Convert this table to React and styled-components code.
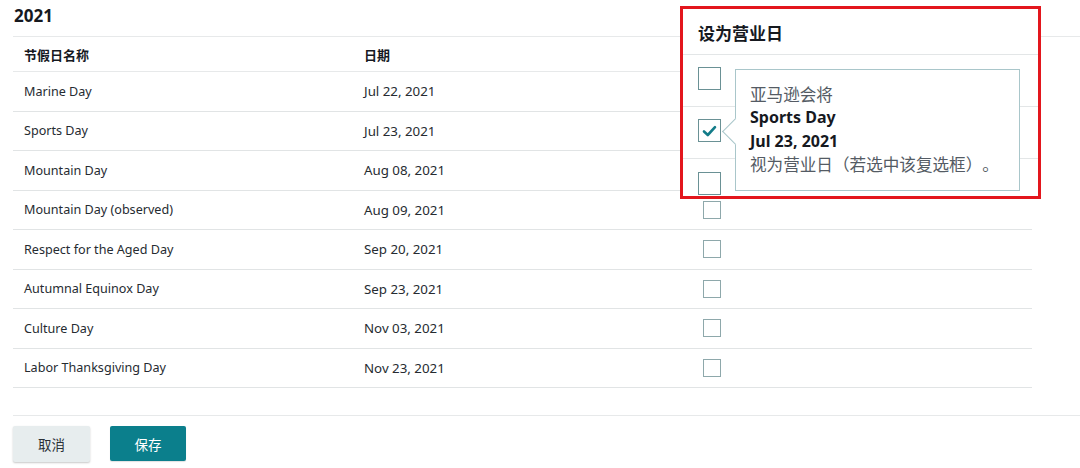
import React from "react";
import styled, { createGlobalStyle } from "styled-components";

const Global = createGlobalStyle`
  html, body { margin: 0; padding: 0; background: #fff; }
  body {
    font-family: "Noto Sans", "Noto Sans CJK SC", sans-serif;
    color: #16191f;
    overflow: hidden;
    text-spacing-trim: space-all;
  }
`;

const Page = styled.div`
  position: relative;
  width: 1080px;
  height: 468px;
  padding-left: 13px;
  box-sizing: border-box;
  overflow: hidden;
`;

const Title = styled.div`
  height: 37px;
  display: flex;
  align-items: center;
  padding-left: 1px;
  padding-bottom: 6px;
  box-sizing: border-box;
  font-size: 17px;
  font-weight: 700;
  color: #16191f;
  border-bottom: 1px solid #e7e9ea;
`;

const Table = styled.div`
  width: 1019px;
  display: flex;
  flex-direction: column;
`;

const Row = styled.div`
  display: grid;
  grid-template-columns: 340px 339px 1fr;
  align-items: center;
  height: ${(p) => (p.$head ? "35px" : "39.5px")};
  border-bottom: 1px solid ${(p) => (p.$head ? "#e7e9ea" : "#e1e4e5")};
  box-sizing: border-box;
`;

const Cell = styled.div`
  padding-left: 11px;
  font-size: ${(p) => (p.$head ? "13px" : p.$date ? "13.3px" : "12.6px")};
  font-weight: ${(p) => (p.$head ? 700 : 400)};
  color: ${(p) => (p.$head ? "#16191f" : "#262b31")};
  display: flex;
  align-items: center;
  white-space: nowrap;
`;

const Box = styled.span`
  display: inline-flex;
  align-items: center;
  justify-content: center;
  width: ${(p) => (p.$big ? "23px" : "18px")};
  height: ${(p) => (p.$big ? "23px" : "18px")};
  box-sizing: border-box;
  border: ${(p) => (p.$big ? "1.6px solid #6a9195" : "1.3px solid #8ea8ab")};
  background: #fff;
`;

const Footer = styled.div`
  margin-top: 27px;
  border-top: 1px solid #e7e9ea;
  padding-top: 10px;
  display: flex;
  gap: 20px;
`;

const Button = styled.button`
  width: ${(p) => (p.$primary ? "76px" : "77px")};
  height: ${(p) => (p.$primary ? "35px" : "36px")};
  border: none;
  border-radius: 2px;
  font-family: "Noto Sans", "Noto Sans CJK SC", sans-serif;
  font-size: 13.5px;
  background: ${(p) => (p.$primary ? "#0b7f8c" : "#e7edee")};
  color: ${(p) => (p.$primary ? "#ffffff" : "#2b3036")};
  box-shadow: ${(p) =>
    p.$primary ? "0 1px 1px rgba(0,0,0,0.12)" : "0 1px 2px rgba(0,0,0,0.22)"};
  padding: 0;
`;

const Highlight = styled.div`
  position: absolute;
  left: 680px;
  top: 6px;
  width: 361px;
  height: 193px;
  box-sizing: border-box;
  border: 3px solid #e3161d;
  background: #fff;
  display: flex;
  flex-direction: column;
`;

const MagHeader = styled.div`
  height: 46px;
  flex: none;
  display: flex;
  align-items: center;
  padding-left: 15px;
  padding-top: 1px;
  box-sizing: border-box;
  font-size: 17px;
  font-weight: 700;
  color: #16191f;
  border-bottom: 1px solid #e3e6e7;
`;

const MagRow = styled.div`
  height: 52px;
  flex: none;
  display: flex;
  align-items: center;
  padding-left: 15px;
  padding-bottom: 4px;
  box-sizing: border-box;
  border-bottom: ${(p) => (p.$last ? "none" : "1px solid #e3e6e7")};
`;

const Tip = styled.div`
  position: absolute;
  left: 52px;
  top: 60px;
  width: 285px;
  height: 122px;
  box-sizing: border-box;
  border: 1.3px solid #a9c6ca;
  background: #fff;
  padding: 13px 0 0 14px;
  display: flex;
  flex-direction: column;
  &::before {
    content: "";
    position: absolute;
    left: -10px;
    top: 52px;
    width: 18px;
    height: 18px;
    background: #fff;
    border-left: 1.3px solid #a9c6ca;
    border-bottom: 1.3px solid #a9c6ca;
    transform: rotate(45deg);
  }
`;

const TipLine = styled.div`
  position: relative;
  font-size: ${(p) => (p.$bold ? "16px" : "16.6px")};
  line-height: 23.3px;
  font-weight: ${(p) => (p.$bold ? 700 : 400)};
  color: ${(p) => (p.$bold ? "#16191f" : "#545b64")};
  white-space: nowrap;
`;

const Check = () => (
  <svg width="15" height="12" viewBox="0 0 15 12">
    <polyline
      points="2,6.5 5.8,10 13,2.2"
      fill="none"
      stroke="#137c89"
      strokeWidth="2.6"
      strokeLinecap="round"
      strokeLinejoin="round"
    />
  </svg>
);

const holidays = [
  ["Marine Day", "Jul 22, 2021"],
  ["Sports Day", "Jul 23, 2021"],
  ["Mountain Day", "Aug 08, 2021"],
  ["Mountain Day (observed)", "Aug 09, 2021"],
  ["Respect for the Aged Day", "Sep 20, 2021"],
  ["Autumnal Equinox Day", "Sep 23, 2021"],
  ["Culture Day", "Nov 03, 2021"],
  ["Labor Thanksgiving Day", "Nov 23, 2021"],
];

export default function App() {
  return (
    <Page>
      <Global />
      <Title>2021</Title>
      <Table>
        <Row $head>
          <Cell $head>节假日名称</Cell>
          <Cell $head>日期</Cell>
          <Cell $head>设为营业日</Cell>
        </Row>
        {holidays.map(([name, date], i) => (
          <Row key={name}>
            <Cell>{name}</Cell>
            <Cell $date>{date}</Cell>
            <Cell>
              <Box>{i === 1 ? <Check /> : null}</Box>
            </Cell>
          </Row>
        ))}
      </Table>
      <Footer>
        <Button>取消</Button>
        <Button $primary>保存</Button>
      </Footer>

      <Highlight>
        <MagHeader>设为营业日</MagHeader>
        <MagRow>
          <Box $big />
        </MagRow>
        <MagRow>
          <Box $big>
            <Check />
          </Box>
        </MagRow>
        <MagRow $last>
          <Box $big />
        </MagRow>
        <Tip>
          <TipLine>亚马逊会将</TipLine>
          <TipLine $bold>Sports Day</TipLine>
          <TipLine $bold>Jul 23, 2021</TipLine>
          <TipLine>视为营业日（若选中该复选框）。</TipLine>
        </Tip>
      </Highlight>
    </Page>
  );
}
